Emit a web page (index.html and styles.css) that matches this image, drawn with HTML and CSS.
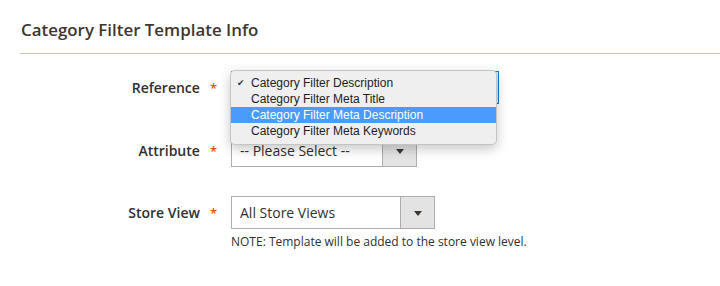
FILE: index.html
```html
<!DOCTYPE html>
<html>
<head>
<meta charset="utf-8">
<link rel="stylesheet" href="styles.css">
</head>
<body>
<div class="page">
  <h2 class="title">Category Filter Template Info</h2>
  <div class="form">
    <div class="field">
      <div class="label">Reference<span class="star">*</span></div>
      <div class="control">
        <div class="select select-ref focus"><span class="val"></span><span class="arrow"></span></div>
        <ul class="menu">
          <li class="checked">Category Filter Description</li>
          <li>Category Filter Meta Title</li>
          <li class="hl">Category Filter Meta Description</li>
          <li>Category Filter Meta Keywords</li>
        </ul>
      </div>
    </div>
    <div class="field field-attr">
      <div class="label">Attribute<span class="star">*</span></div>
      <div class="control">
        <div class="select select-attr"><span class="val">-- Please Select --</span><span class="arrow"></span></div>
      </div>
    </div>
    <div class="field">
      <div class="label">Store View<span class="star">*</span></div>
      <div class="control">
        <div class="select select-store"><span class="val">All Store Views</span><span class="arrow"></span></div>
        <div class="note">NOTE: Template will be added to the store view level.</div>
      </div>
    </div>
  </div>
</div>
</body>
</html>
```
FILE: styles.css
```css
html, body { margin: 0; padding: 0; background: #fff; }
body { font-family: "Open Sans", "Liberation Sans", sans-serif; color: #303030; }
.page { width: 720px; height: 286px; overflow: hidden; }
.title {
  margin: 0 0 0 20px;
  padding: 18px 0 11px 1px;
  font-size: 16.9px;
  line-height: 24px;
  font-weight: 600;
  color: #41362f;
  border-bottom: 1px solid #cac3b4;
}
.form { margin-top: 17px; }
.field { display: flex; align-items: flex-start; margin-bottom: 29px; }
.field-attr { margin-bottom: 28px; }
.label {
  width: 211px;
  margin-left: 20px;
  box-sizing: border-box;
  padding-right: 14px;
  text-align: right;
  font-size: 14px;
  font-weight: 600;
  line-height: 34px;
  color: #303030;
}
.star { color: #eb5202; font-size: 13px; margin-left: 10px; font-weight: 600; }
.control { position: relative; }
.select {
  display: flex;
  box-sizing: border-box;
  height: 33px;
  border: 1px solid #adadad;
  background: #fff;
  font-size: 14px;
  line-height: 31px;
}
.select .val { flex: 1; padding-left: 8px; white-space: nowrap; overflow: hidden; }
.select .arrow {
  width: 33px;
  border-left: 1px solid #adadad;
  background: #e3e3e3;
  position: relative;
}
.select .arrow::after {
  content: "";
  position: absolute;
  left: 13px;
  top: 14px;
  border-left: 4px solid transparent;
  border-right: 4px solid transparent;
  border-top: 5px solid #41362f;
}
.select-ref { width: 268px; border-color: #007bdb; }
.select-attr { width: 186px; }
.select-store { width: 204px; }
.menu {
  position: absolute;
  left: -1px;
  top: -1px;
  width: 267px;
  box-sizing: border-box;
  margin: 0;
  padding: 4px 0 5px;
  list-style: none;
  background: #efefef;
  border: 1px solid rgba(0,0,0,0.18);
  border-radius: 5px;
  box-shadow: 0 4px 12px rgba(0,0,0,0.22);
  font-family: "Liberation Sans", Arial, sans-serif;
  font-size: 12px;
  color: #1e1e1e;
  z-index: 5;
}
.menu li {
  height: 16px;
  line-height: 16px;
  padding-left: 20px;
  position: relative;
  white-space: nowrap;
}
.menu li.checked::before {
  content: "\2714";
  position: absolute;
  left: 6px;
  top: 0;
  font-family: "DejaVu Sans", sans-serif;
  font-size: 9px;
  color: #333;
}
.menu li.hl { background: #4a9bfc; color: #fff; }
.note {
  margin-top: 5px;
  font-size: 12px;
  line-height: 16px;
  color: #303030;
  white-space: nowrap;
}
```
